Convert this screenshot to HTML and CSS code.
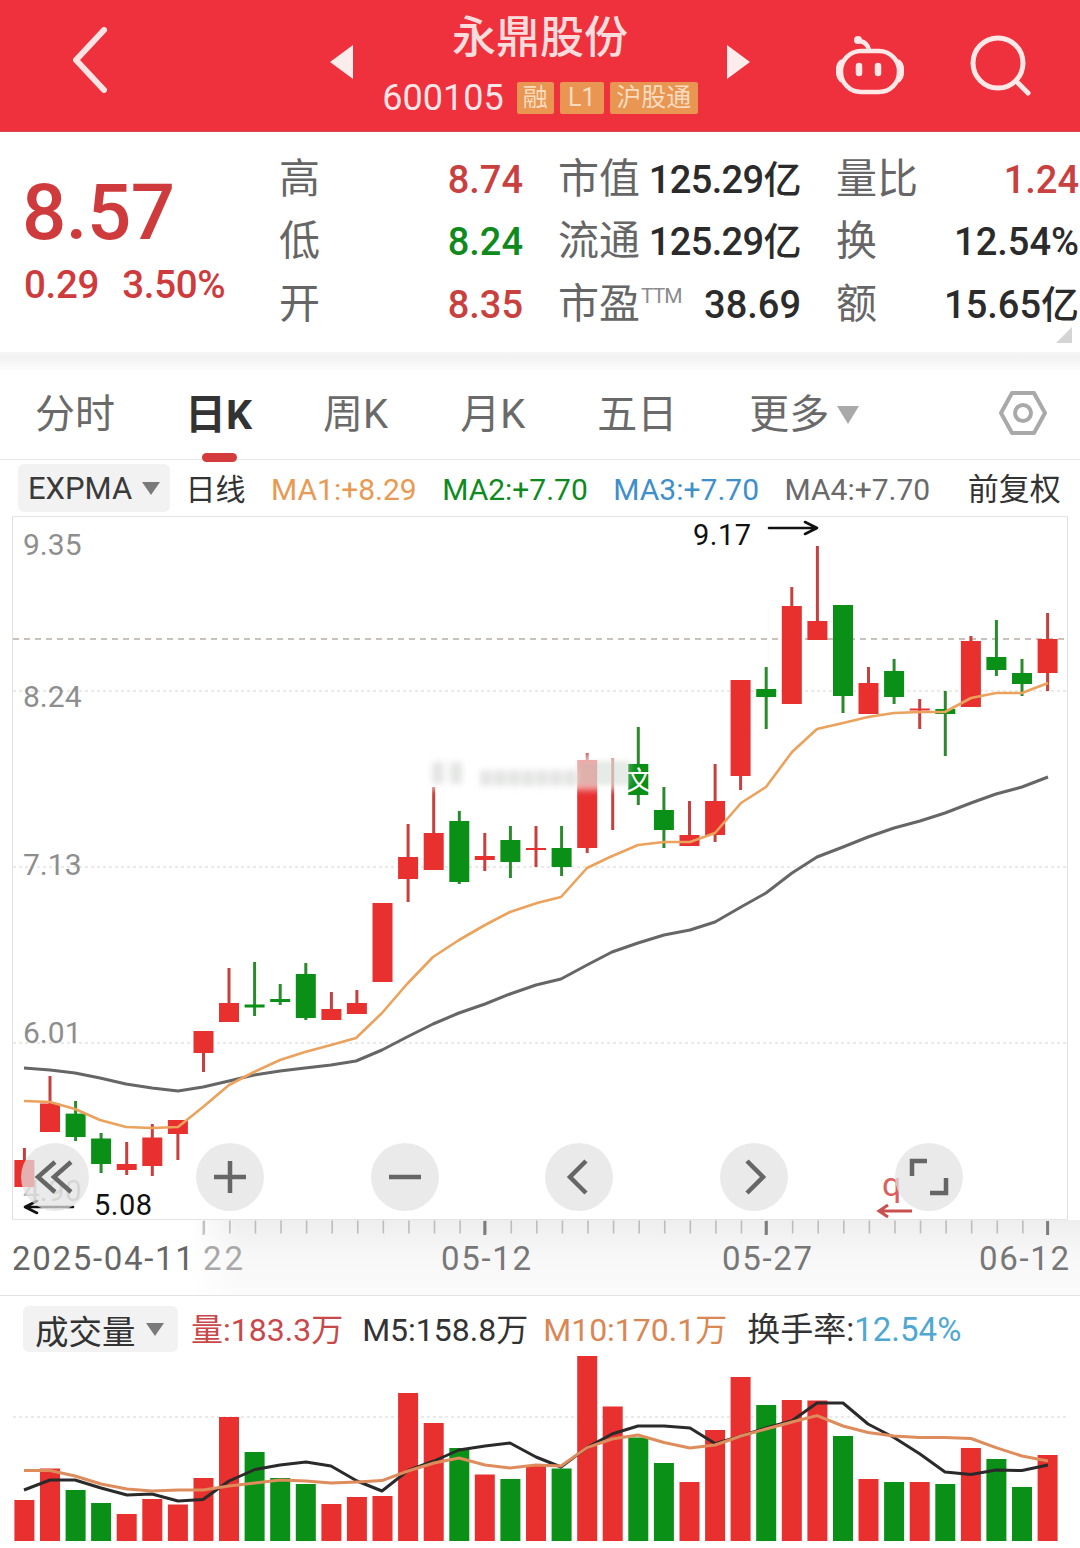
FILE: index.html
```html
<!DOCTYPE html>
<html lang="zh-CN">
<head>
<meta charset="utf-8">
<title>永鼎股份</title>
<link rel="stylesheet" href="styles.css">
</head>
<body>
<div class="page">
  <header class="header">
    <svg class="back" viewBox="0 0 40 66"><path d="M33 3 5 33l28 30"/></svg>
    <div class="center">
      <svg class="tri" viewBox="0 0 24 34"><path d="M23 0v34L0 17z"/></svg>
      <div class="name">
        <div class="title">永鼎股份</div>
        <div class="code-row">
          <span class="code">600105</span>
          <span class="badge b1">融</span>
          <span class="badge b2">L1</span>
          <span class="badge b3">沪股通</span>
        </div>
      </div>
      <svg class="tri" viewBox="0 0 24 34"><path d="M1 0v34l23-17z"/></svg>
    </div>
    <svg class="robot" viewBox="0 0 68 62">
      <circle class="dot" cx="22" cy="6" r="4"/>
      <path d="M24 7c5 1 8 4 9 9"/>
      <rect x="5" y="17" width="58" height="41" rx="20" ry="20"/>
      <path d="M5 28c-4 3-4 14 0 18M63 28c4 3 4 14 0 18"/>
      <path class="eye" d="M23 32v7M42 32v7"/>
    </svg>
    <svg class="search" viewBox="0 0 62 62"><circle cx="28" cy="28" r="25"/><path d="m46 46 12 12"/></svg>
  </header>

  <section class="stats">
    <div class="price">
      <div class="now">8.57</div>
      <div class="delta"><span>0.29</span><span>3.50%</span></div>
    </div>
    <div class="grid">
      <div class="cell"><span class="lab">高</span><span class="val up">8.74</span></div>
      <div class="cell"><span class="lab">市值</span><span class="val tight">125.29亿</span></div>
      <div class="cell"><span class="lab">量比</span><span class="val up">1.24</span></div>
      <div class="cell"><span class="lab">低</span><span class="val down">8.24</span></div>
      <div class="cell"><span class="lab">流通</span><span class="val tight">125.29亿</span></div>
      <div class="cell"><span class="lab">换</span><span class="val">12.54%</span></div>
      <div class="cell"><span class="lab">开</span><span class="val up">8.35</span></div>
      <div class="cell"><span class="lab">市盈<sup class="ttm">TTM</sup></span><span class="val">38.69</span></div>
      <div class="cell"><span class="lab">额</span><span class="val">15.65亿</span></div>
    </div>
    <i class="corner"></i>
  </section>
  <div class="band"></div>

  <nav class="tabs">
    <span class="tab">分时</span>
    <span class="tab active">日K</span>
    <span class="tab">周K</span>
    <span class="tab">月K</span>
    <span class="tab">五日</span>
    <span class="tab more">更多<i class="caret caret-lg"></i></span>
    <svg class="hex" viewBox="0 0 50 46"><path d="M14 3h22l11 20-11 20H14L3 23z"/><circle cx="25" cy="23" r="8"/></svg>
  </nav>

  <div class="inds">
    <span class="pill pill-ex">EXPMA<i class="caret"></i></span>
    <span class="ind dark">日线</span>
    <span class="ind c1">MA1:+8.29</span>
    <span class="ind c2">MA2:+7.70</span>
    <span class="ind c3">MA3:+7.70</span>
    <span class="ind c4">MA4:+7.70</span>
    <span class="ind dark fq">前复权</span>
  </div>

  <div class="chart">
    <svg class="kline" viewBox="0 516 1080 704">
      <path class="frame" d="M13 516.5H1067M13 1219.5H1067"/>
      <g class="grid-light">
        <path d="M13 691H1067M13 867H1067M13 1043H1067"/>
      </g>
      <path class="grid-main" d="M13 639H1067"/>
      <g class="ylab">
        <text x="23" y="555">9.35</text>
        <text x="23" y="707">8.24</text>
        <text x="23" y="875">7.13</text>
        <text x="23" y="1043">6.01</text>
        <text x="23" y="1201" class="faded">4.90</text>
      </g>
      <g class="wick-r">
        <path d="M24.4 1148V1187M50 1076V1132M126.7 1142V1175M152.3 1124V1176M177.9 1120V1160M203.5 1031V1072M229 968V1022M331.4 992V1020M356.9 990V1014M408.1 824V902M433.7 787V870M484.8 833V871M536 826V867M587.2 753V853M612.7 758V830M689.5 801V846M715.1 764V842M740.6 680V790M791.8 587V704M817.4 546V640M868.5 667V714M919.7 699V729M970.9 636V707M1047.6 613V691"/>
      </g>
      <g class="wick-g">
        <path d="M75.6 1101V1141M101.1 1133V1173M254.6 962V1016M280.2 984V1005M305.8 963V1020M459.3 811V884M510.4 826V878M561.6 826V876M638.3 727V805M663.9 787V848M766.2 667V729M843 605V713M894.1 659V704M945.3 691V756M996.4 620V676M1022 659V696"/>
      </g>
      <g class="bar-r">
        <rect x="14.4" y="1160" width="20" height="27"/>
        <rect x="40" y="1103.5" width="20" height="28.5"/>
        <rect x="116.7" y="1164" width="20" height="6"/>
        <rect x="142.3" y="1137.5" width="20" height="28.5"/>
        <rect x="167.9" y="1120" width="20" height="14"/>
        <rect x="193.5" y="1031" width="20" height="22"/>
        <rect x="219" y="1003" width="20" height="19"/>
        <rect x="321.4" y="1009" width="20" height="11"/>
        <rect x="346.9" y="1003" width="20" height="11"/>
        <rect x="372.5" y="903" width="20" height="79"/>
        <rect x="398.1" y="857" width="20" height="22"/>
        <rect x="423.7" y="833" width="20" height="37"/>
        <rect x="474.8" y="856" width="20" height="4"/>
        <rect x="526" y="848" width="20" height="2"/>
        <rect x="577.2" y="760" width="20" height="88"/>
        <rect x="679.5" y="835" width="20" height="11"/>
        <rect x="705.1" y="801" width="20" height="34"/>
        <rect x="730.6" y="680" width="20" height="96"/>
        <rect x="781.8" y="606" width="20" height="98"/>
        <rect x="807.4" y="621" width="20" height="19"/>
        <rect x="858.5" y="683" width="20" height="31"/>
        <rect x="909.7" y="708.5" width="20" height="2"/>
        <rect x="960.9" y="641" width="20" height="66"/>
        <rect x="1037.6" y="639" width="20" height="34"/>
      </g>
      <g class="bar-g">
        <rect x="65.6" y="1113.6" width="20" height="23.4"/>
        <rect x="91.1" y="1138.5" width="20" height="25.5"/>
        <rect x="244.6" y="1004.5" width="20" height="3"/>
        <rect x="270.2" y="999" width="20" height="3"/>
        <rect x="295.8" y="974" width="20" height="44"/>
        <rect x="449.3" y="821" width="20" height="61"/>
        <rect x="500.4" y="840" width="20" height="22"/>
        <rect x="551.6" y="848" width="20" height="19"/>
        <rect x="628.3" y="764" width="20" height="31"/>
        <rect x="653.9" y="810" width="20" height="20"/>
        <rect x="756.2" y="689" width="20" height="8"/>
        <rect x="833" y="605" width="20" height="91"/>
        <rect x="884.1" y="671" width="20" height="26"/>
        <rect x="935.3" y="709" width="20" height="5"/>
        <rect x="986.4" y="657" width="20" height="13"/>
        <rect x="1012" y="673" width="20" height="11"/>
      </g>
      <polyline class="ma-gray" points="24,1068 50,1070 75,1073 100,1078 126,1084 152,1088 178,1091 203,1087 229,1081 254,1075 280,1071 305,1068 331,1065 356,1061 382,1050 407,1037 433,1024 459,1013 485,1004 510,994 536,985 561,979 587,965 612,952 638,943 664,935 690,930 715,922 741,907 766,893 792,873 817,857 843,847 868,837 894,828 920,821 945,813 971,803 996,794 1022,787 1048,777"/>
      <polyline class="ma-orange" points="24,1101 50,1102 75,1109 100,1120 126,1127 152,1128 178,1127 203,1107 229,1085 254,1072 280,1060 305,1052 331,1045 356,1038 382,1013 407,984 433,957 459,940 485,925 510,912 537,903 561,897 587,868 610,857 638,845 664,842 690,842 715,833 741,803 766,787 792,752 817,729 843,723 868,717 894,713 920,712 945,712 971,698 996,693 1022,693 1048,683"/>
      <text class="glyph" x="626" y="790">文</text>
      <g class="smear">
        <rect x="430" y="755" width="196" height="35" class="smear-bg"/>
        <path class="sm1" d="M438 762V784M456 762V784M486 770V786M500 770V786M514 770V786M528 770V786M542 770V786M556 770V786M570 770V786"/>
        <path class="sm2" d="M578 765H632M578 773H632M578 781H632"/>
      </g>
      <g class="note">
        <text x="693" y="545">9.17</text>
        <text x="94" y="1215">5.08</text>
        <path d="M769 528H817M805 522l12 6-12 6M73 1207H25M37 1201l-12 6 12 6"/>
      </g>
      <text class="mark" x="882" y="1196">q</text>
      <path class="mark-arrow" d="M912 1211H879M888 1205l-9 6 9 6"/>
    </svg>
    <div class="tools">
      <span class="tool"><svg viewBox="0 0 68 68"><path d="M34 19 17 34l17 15M50 19 33 34l17 15"/></svg></span>
      <span class="tool"><svg viewBox="0 0 68 68"><path d="M18 34h32M34 18v32"/></svg></span>
      <span class="tool"><svg viewBox="0 0 68 68"><path d="M18 34h32"/></svg></span>
      <span class="tool"><svg viewBox="0 0 68 68"><path d="M41 18 25 34l16 16"/></svg></span>
      <span class="tool"><svg viewBox="0 0 68 68"><path d="M27 18l16 16-16 16"/></svg></span>
      <span class="tool"><svg viewBox="0 0 68 68"><path d="M17 33V18h15M51 35v15H35"/></svg></span>
    </div>
  </div>

  <div class="axis">
    <svg class="axis-svg" viewBox="0 1220 1080 75">
      <path class="tick" d="M203.5 1227H1048"/>
      <path class="tick-soft" d="M203.5 1221v14"/>
      <path class="tick-major" d="M484.8 1221v14M766.2 1221v14M1047.6 1221v14"/>
      <g class="dates">
        <text x="12" y="1270">2025-04-11</text>
        <text x="203" y="1270" class="dim">22</text>
        <text x="441" y="1270">05-12</text>
        <text x="722" y="1270">05-27</text>
        <text x="979" y="1270">06-12</text>
      </g>
    </svg>
  </div>

  <div class="vol-head">
    <span class="pill pill-vol">成交量<i class="caret"></i></span>
    <span class="v v1">量:183.3万</span>
    <span class="v v2">M5:158.8万</span>
    <span class="v v3">M10:170.1万</span>
    <span class="v v2 v4">换手率:<em>12.54%</em></span>
  </div>

  <div class="vol">
    <svg class="vol-svg" viewBox="0 1354 1080 194">
      <path class="grid-light" d="M13 1417H1067"/>
      <g class="bar-r">
        <rect x="14.4" y="1500" width="20" height="41"/>
        <rect x="40" y="1468.5" width="20" height="72.5"/>
        <rect x="116.7" y="1514" width="20" height="27"/>
        <rect x="142.3" y="1499" width="20" height="42"/>
        <rect x="167.9" y="1504.5" width="20" height="36.5"/>
        <rect x="193.5" y="1478" width="20" height="63"/>
        <rect x="219" y="1417" width="20" height="124"/>
        <rect x="321.4" y="1504" width="20" height="37"/>
        <rect x="346.9" y="1497" width="20" height="44"/>
        <rect x="372.5" y="1496" width="20" height="45"/>
        <rect x="398.1" y="1393" width="20" height="148"/>
        <rect x="423.7" y="1423" width="20" height="118"/>
        <rect x="474.8" y="1474.5" width="20" height="66.5"/>
        <rect x="526" y="1466" width="20" height="75"/>
        <rect x="577.2" y="1356" width="20" height="185"/>
        <rect x="602.7" y="1406.5" width="20" height="134.5"/>
        <rect x="679.5" y="1482" width="20" height="59"/>
        <rect x="705.1" y="1430" width="20" height="111"/>
        <rect x="730.6" y="1377" width="20" height="164"/>
        <rect x="781.8" y="1400" width="20" height="141"/>
        <rect x="807.4" y="1400.5" width="20" height="140.5"/>
        <rect x="858.5" y="1479" width="20" height="62"/>
        <rect x="909.7" y="1482" width="20" height="59"/>
        <rect x="960.9" y="1448" width="20" height="93"/>
        <rect x="1037.6" y="1455" width="20" height="86"/>
      </g>
      <g class="bar-g">
        <rect x="65.6" y="1490" width="20" height="51"/>
        <rect x="91.1" y="1503" width="20" height="38"/>
        <rect x="244.6" y="1452" width="20" height="89"/>
        <rect x="270.2" y="1478" width="20" height="63"/>
        <rect x="295.8" y="1484" width="20" height="57"/>
        <rect x="449.3" y="1448" width="20" height="93"/>
        <rect x="500.4" y="1479" width="20" height="62"/>
        <rect x="551.6" y="1468.5" width="20" height="72.5"/>
        <rect x="628.3" y="1437.5" width="20" height="103.5"/>
        <rect x="653.9" y="1463" width="20" height="78"/>
        <rect x="756.2" y="1405" width="20" height="136"/>
        <rect x="833" y="1436" width="20" height="105"/>
        <rect x="884.1" y="1482" width="20" height="59"/>
        <rect x="935.3" y="1484" width="20" height="57"/>
        <rect x="986.4" y="1459" width="20" height="82"/>
        <rect x="1012" y="1487" width="20" height="54"/>
      </g>
      <polyline class="vol-black" points="24,1490 50,1480 75,1480 101,1488 127,1495 152,1494 178,1501 203,1499.5 229,1481 255,1469.5 280,1465 306,1462 331,1466 357,1481 382,1491 408,1470.5 434,1461 459,1450 485,1446 510,1443 536,1457 561,1467 587,1447.6 612,1434 638,1426 664,1426 690,1428 715,1443.6 741,1436 766,1428 792,1420.7 817,1403 843,1403 868,1424 894,1437.5 920,1454 945,1472 971,1474.5 996,1470 1022,1470.5 1048,1465"/>
      <polyline class="vol-orange" points="24,1470.5 50,1470.5 75,1476 101,1484 127,1489 152,1491 178,1490 203,1490 229,1486 255,1483 280,1480 306,1481 331,1483 357,1482 382,1480.6 408,1471 434,1463 459,1458 485,1465 510,1468 536,1465 561,1466 587,1447.6 612,1439 638,1435 664,1442.5 690,1448 715,1445 741,1436 766,1429 792,1422 817,1415.6 843,1426 868,1432.5 894,1436 920,1437.5 945,1437.5 971,1438.5 996,1447.6 1022,1456 1048,1461"/>
    </svg>
  </div>
</div>
</body>
</html>
```

FILE: styles.css
```css
* { box-sizing: border-box; }
html, body { margin: 0; padding: 0; background: #fff; }
body { font-family: Roboto, "Noto Sans CJK SC", sans-serif; color: #333; }
.page { width: 1080px; height: 1548px; overflow: hidden; }
i, em { font-style: normal; }

/* header */
.header { height: 132px; background: #ef303d; display: flex; align-items: center; position: relative; border-bottom: 1px solid #d9474f; }
.back { width: 40px; height: 66px; margin: -11px 0 0 71px; fill: none; stroke: #fbe4e4; stroke-width: 6; stroke-linejoin: round; stroke-linecap: round; }
.center { display: flex; align-items: center; margin-left: 219px; width: 420px; justify-content: space-between; }
.tri { width: 24px; height: 34px; fill: #fdecec; margin-top: -8px; }
.name { display: flex; flex-direction: column; align-items: center; margin-top: 6px; }
.title { font-size: 44px; line-height: 56px; font-weight: 500; color: #fbdcdc; margin-top: -14px; }
.code-row { display: flex; align-items: center; gap: 6px; height: 32px; margin-top: 16px; }
.code { font-size: 36px; color: #fde4e6; margin-right: 7px; }
.badge { background: #e89652; color: #f9dcc0; font-size: 25px; line-height: 32px; height: 32px; border-radius: 2px; text-align: center; }
.b1 { width: 37px; }
.b2 { width: 44px; }
.b3 { width: 88px; }
.robot { width: 68px; height: 62px; margin: 0 0 2px 86px; fill: none; stroke: #fde8e8; stroke-width: 4.5; stroke-linecap: round; }
.robot .dot { fill: #fde8e8; stroke: none; }
.robot .eye { stroke-width: 6.5; }
.search { width: 62px; height: 62px; margin-left: 66px; fill: none; stroke: #fde8e8; stroke-width: 5; stroke-linecap: round; }

/* stats */
.stats { height: 220px; display: flex; position: relative; background: #fff; }
.price { width: 279px; padding: 37px 0 0 22px; color: #cf3b3c; }
.now { font-size: 78px; line-height: 88px; font-weight: 500; letter-spacing: -.5px; }
.delta { display: flex; gap: 23px; font-size: 38.5px; line-height: 44px; margin-top: 6px; padding-left: 2px; letter-spacing: -.3px; font-weight: 500; }
.grid { display: grid; grid-template-columns: 244px 243px 243px; column-gap: 35px; grid-auto-rows: 62.5px; padding-top: 15.5px; }
.cell { display: flex; justify-content: space-between; align-items: baseline; line-height: 62px; }
.lab { font-size: 41px; color: #666; white-space: nowrap; }
.val { font-size: 38px; font-weight: 500; color: #2b2b2b; white-space: nowrap; }
.tight { letter-spacing: -.6px; }
.val.up { color: #c8413f; }
.val.down { color: #10891d; }
.ttm { font-size: 21px; color: #8b8b8b; vertical-align: 15px; line-height: 0; margin-left: 1px; letter-spacing: -1px; }
.corner { position: absolute; right: 8px; bottom: 9px; width: 0; height: 0; border-left: 16px solid transparent; border-bottom: 16px solid #d4d4d4; }
.band { height: 18px; background: linear-gradient(#f6f6f6, #f2f2f2 30%, #fdfdfd); }

/* tabs */
.tabs { height: 90px; display: flex; align-items: center; padding: 0 0 0 35px; gap: 72px; border-bottom: 1px solid #e6e6e6; position: relative; font-size: 40px; color: #6a6a6a; }
.tab { line-height: 50px; white-space: nowrap; }
.tab.active { color: #333; font-weight: 700; font-size: 41px; margin: 0 -1px 0 -2px; position: relative; }
.tab.active::after { content: ""; position: absolute; left: 17px; bottom: -22px; width: 35px; height: 9px; background: #d43b3d; border-radius: 5px; }
.more { display: flex; align-items: center; }
.caret { display: inline-block; width: 0; height: 0; border-left: 9px solid transparent; border-right: 9px solid transparent; border-top: 13px solid #7a7a7a; }
.caret-lg { border-left-width: 11px; border-right-width: 11px; border-top: 18px solid #a9a9a9; margin-left: 8px; }
.hex { position: absolute; left: 998px; top: 20px; width: 50px; height: 46px; fill: none; stroke: #a9a9a9; stroke-width: 4; stroke-linejoin: round; }

/* indicator row */
.inds { height: 56px; display: flex; align-items: center; padding: 0 0 0 18px; font-size: 30px; gap: 25.5px; white-space: nowrap; }
.pill { background: #f2f2f2; border-radius: 6px; display: flex; align-items: center; color: #3a3a3a; }
.pill-ex { width: 152px; height: 48px; padding-left: 10px; font-size: 31px; gap: 10px; margin-right: -10px; }
.ind { line-height: 48px; margin-top: 4px; }
.dark { color: #333; }
.c1 { color: #e89a52; }
.c2 { color: #0e8a20; }
.c3 { color: #3f8fca; }
.c4 { color: #6a6a6a; }
.fq { margin-left: 12px; font-size: 31px; }

/* chart */
.chart { height: 704px; position: relative; }
.kline { display: block; width: 1080px; height: 704px; overflow: visible; }
.chart::before, .chart::after { content: ""; position: absolute; top: 0; bottom: 0; width: 1px; background: #e2e2e2; }
.chart::before { left: 12px; }
.chart::after { left: 1067px; }
.frame { fill: none; stroke: #e4e4e4; stroke-width: 1; }
.grid-light path, path.grid-light { fill: none; stroke: #e4e4e4; stroke-width: 1.5; stroke-dasharray: 3 3; }
.grid-main { fill: none; stroke: #b7aea6; stroke-width: 1.3; stroke-dasharray: 6 5; }
.ylab text { font-size: 30px; fill: #8e8e8e; }
.ylab .faded { fill: #b5b5b5; }
.wick-r path { fill: none; stroke: #c6403f; stroke-width: 3; }
.wick-g path { fill: none; stroke: #2c8a2e; stroke-width: 3; }
.bar-r rect { fill: #e8302f; }
.bar-g rect { fill: #0a8f17; }
.ma-gray { fill: none; stroke: #666; stroke-width: 3; stroke-linejoin: round; }
.ma-orange { fill: none; stroke: #eaa25c; stroke-width: 2.6; stroke-linejoin: round; }
.smear { filter: blur(3px); }
.smear-bg { fill: #fff; opacity: .6; }
.sm1 { fill: none; stroke: #e3e5e3; stroke-width: 12; }
.sm2 { fill: none; stroke: #a9bdaa; stroke-width: 4; opacity: .6; }
.glyph { font-size: 26px; fill: #fff; }
.note text { font-size: 29px; fill: #111; letter-spacing: .5px; }
.note path { fill: none; stroke: #111; stroke-width: 2.6; stroke-linecap: round; stroke-linejoin: round; }
.mark { font-size: 34px; fill: #d9605f; }
.mark-arrow { fill: none; stroke: #c9504e; stroke-width: 3; }
.tools { position: absolute; left: 21px; top: 627px; width: 942px; display: flex; justify-content: space-between; }
.tool { width: 68px; height: 68px; border-radius: 50%; background: rgba(226, 226, 226, .72); display: block; }
.tool svg { display: block; width: 68px; height: 68px; fill: none; stroke: #666; stroke-width: 4.5; }

/* axis */
.axis { height: 76px; border-bottom: 1px solid #e2e2e2; background: linear-gradient(90deg, #fff 190px, rgba(255,255,255,0) 240px), linear-gradient(#eeeeee, #f7f7f7 45%, #fbfbfb); }
.axis-svg { display: block; width: 1080px; height: 75px; }
.tick { fill: none; stroke: #bdbdbd; stroke-width: 13; stroke-dasharray: 1.6 23.98; }
.tick-soft { fill: none; stroke: #c4c4c4; stroke-width: 2; }
.tick-major { fill: none; stroke: #7d7d7d; stroke-width: 3; }
.dates text { font-size: 33px; fill: #777; letter-spacing: 1.7px; }
.dates text:first-child { fill: #666; }
.dates .dim { fill: #a8a8a8; letter-spacing: 3px; }

/* volume */
.vol-head { height: 58px; display: flex; align-items: center; padding-left: 23px; gap: 19px; font-size: 32px; white-space: nowrap; }
.pill-vol { width: 155px; height: 46px; padding-left: 12px; font-size: 33.5px; gap: 10px; margin-top: 8px; color: #333; margin-right: -6px; }
.v { margin-top: 4px; }
.v1 { color: #c9484a; }
.v2 { color: #333; }
.v3 { color: #da8756; margin-left: -4px; }
.v4 { font-size: 33px; margin-left: 1px; }
.v4 em { color: #4ea8d2; }
.vol { height: 194px; position: relative; }
.vol-svg { display: block; width: 1080px; height: 194px; }
.vol-black { fill: none; stroke: #2a2a2a; stroke-width: 3; stroke-linejoin: round; }
.vol-orange { fill: none; stroke: #df8c5c; stroke-width: 3; stroke-linejoin: round; }
```
